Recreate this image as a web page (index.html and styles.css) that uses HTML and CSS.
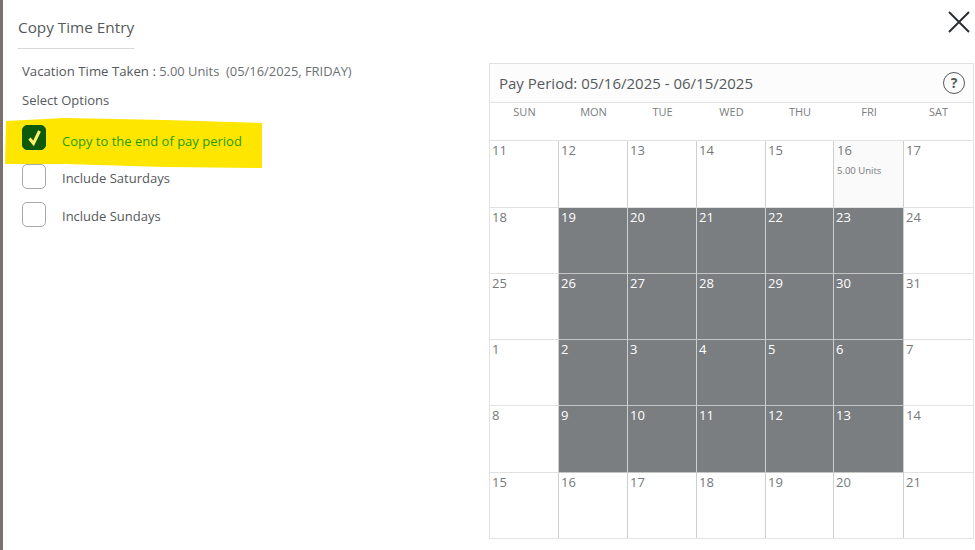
FILE: index.html
```html
<!DOCTYPE html>
<html lang="en">
<head>
    <meta charset="UTF-8">
    <title>Copy Time Entry</title>
    <link rel="stylesheet" href="styles.css">
</head>
<body>
<div class="dialog">
    <div class="options">
        <div class="title">Copy Time Entry</div>
        <div class="taken"><span class="taken-label">Vacation Time Taken :</span> 5.00 Units &nbsp;(05/16/2025, FRIDAY)</div>
        <div class="select-label">Select Options</div>
        <div class="option option-checked">
            <!-- marker scribble behind the first option -->
            <svg class="marker" width="258" height="52" viewBox="0 0 258 52">
                <path d="M1 3 L60 0 L160 2 L257 5 L257 50 L160 49 L60 46 L0 46 Z" fill="#ffe600"/>
            </svg>
            <span class="box box-on">
                <svg width="24" height="24" viewBox="0 0 24 24">
                    <path d="M6.5 12.5 L10.5 17.5 L16.5 5" fill="none" stroke="#fff06a" stroke-width="3"/>
                </svg>
            </span>
            <span class="option-text">Copy to the end of pay period</span>
        </div>
        <div class="option">
            <span class="box"></span>
            <span class="option-text">Include Saturdays</span>
        </div>
        <div class="option">
            <span class="box"></span>
            <span class="option-text">Include Sundays</span>
        </div>
    </div>
    <div class="side">
        <div class="close-row">
            <svg width="24" height="24" viewBox="0 0 24 24">
                <path d="M2 2 L22 22 M22 2 L2 22" stroke="#2b2f33" stroke-width="2" fill="none"/>
            </svg>
        </div>
        <div class="calendar">
            <div class="cal-header">
                <span>Pay Period: 05/16/2025 - 06/15/2025</span>
                <span class="help">?</span>
            </div>
            <div class="cal-grid" id="calGrid"></div>
        </div>
    </div>
</div>
<script>
    var days = ['SUN', 'MON', 'TUE', 'WED', 'THU', 'FRI', 'SAT'];
    var weeks = [
        [11, 12, 13, 14, 15, 16, 17],
        [18, 19, 20, 21, 22, 23, 24],
        [25, 26, 27, 28, 29, 30, 31],
        [1, 2, 3, 4, 5, 6, 7],
        [8, 9, 10, 11, 12, 13, 14],
        [15, 16, 17, 18, 19, 20, 21]
    ];
    var grid = document.getElementById('calGrid');

    days.forEach(function(day) {
        var el = document.createElement('div');
        el.className = 'weekday';
        el.textContent = day;
        grid.appendChild(el);
    });

    weeks.forEach(function(week, w) {
        week.forEach(function(num, d) {
            var cell = document.createElement('div');
            cell.className = 'day';
            // rows 2-5, mon to fri are the copied days
            if (w >= 1 && w <= 4 && d >= 1 && d <= 5) {
                cell.className += ' day-copied';
            }
            if (w === 0 && d === 5) {
                cell.className += ' day-source';
                cell.innerHTML = num + '<div class="units">5.00 Units</div>';
            } else {
                cell.textContent = num;
            }
            grid.appendChild(cell);
        });
    });
</script>
</body>
</html>
```

FILE: styles.css
```css
body {
    margin: 0;
    height: 550px;
    overflow: hidden;
    background-color: #fff;
    font-family: "Open Sans", sans-serif;
    color: #55595c;
    border-left: 3px solid #7a7070;
    box-sizing: border-box;
}
.dialog {
    display: flex;
    height: 100%;
}
.options {
    width: 486px;
    padding: 17px 0 0 15px;
    box-sizing: border-box;
}
.title {
    display: inline-block;
    font-size: 15.3px;
    line-height: 20px;
    padding-bottom: 11px;
    border-bottom: 1px solid #d8d8d8;
    vertical-align: top;
}
.taken {
    margin: 13px 0 0 4px;
    font-size: 12.9px;
    line-height: 18px;
    color: #6c7073;
}
.taken-label, .select-label {
    color: #55595c;
}
.taken-label {
    font-size: 13.2px;
}
.select-label {
    margin: 11px 0 0 4px;
    font-size: 13px;
    line-height: 18px;
}
.option {
    position: relative;
    display: flex;
    align-items: center;
    height: 38px;
    margin-left: 4px;
    font-size: 13px;
}
.option-checked {
    height: 37px;
    margin-top: 13px;
}
.marker {
    position: absolute;
    left: -17px;
    top: -4px;
}
.box {
    position: relative;
    width: 24px;
    height: 25px;
    margin-right: 16px;
    margin-bottom: 4px;
    border: 1px solid #a9a9a9;
    border-radius: 5px;
    background: #fff;
    box-sizing: border-box;
    flex: none;
}
.box-on {
    margin-bottom: 7px;
    background: #0d5a0d;
    border-color: #0d5a0d;
}
.box-on svg {
    display: block;
}
.option-text {
    position: relative;
}
.option-checked .option-text {
    color: #1f9c00;
}
.side {
    width: 485px;
}
.close-row {
    display: flex;
    justify-content: flex-end;
    height: 63px;
    padding: 10px 3px 0 0;
    box-sizing: border-box;
}
.calendar {
    height: 476px;
    border: 1px solid #e2e2e2;
    box-sizing: border-box;
}
.cal-header {
    display: flex;
    align-items: center;
    justify-content: space-between;
    height: 39px;
    padding: 0 8px 0 9px;
    background: #fcfcfc;
    border-bottom: 1px solid #e2e2e2;
    font-size: 15px;
    box-sizing: border-box;
}
.help {
    width: 22px;
    height: 22px;
    border: 1px solid #55595c;
    border-radius: 50%;
    text-align: center;
    font-size: 14px;
    font-weight: 700;
    line-height: 20px;
    box-sizing: border-box;
}
.cal-grid {
    display: grid;
    grid-template-columns: 69px 69px 69px 69px 68px 70px 69px;
    grid-template-rows: 38px 67px 66px 66px 66px 67px 65px;
}
.weekday {
    padding-top: 1px;
    text-align: center;
    font-size: 11px;
    line-height: 15px;
    color: #7a7d80;
    border-bottom: 1px solid #e2e2e2;
    box-sizing: border-box;
}
.day {
    padding: 0 2px;
    font-size: 13px;
    line-height: 18px;
    color: #75797c;
    border-right: 1px solid #cdd1cc;
    border-bottom: 1px solid #e2e2e2;
    box-sizing: border-box;
}
.day:nth-child(7n) {
    border-right: none;
}
.day:nth-last-child(-n+7) {
    border-bottom: none;
}
.day-copied {
    background: #7b7e81;
    color: #fff;
    border-bottom-color: #c4c6c4;
}
.day-source {
    padding-left: 3px;
    background: #fafafa;
}
.units {
    margin-top: 5px;
    font-size: 9.5px;
    line-height: 14px;
    color: #75797c;
}
```
